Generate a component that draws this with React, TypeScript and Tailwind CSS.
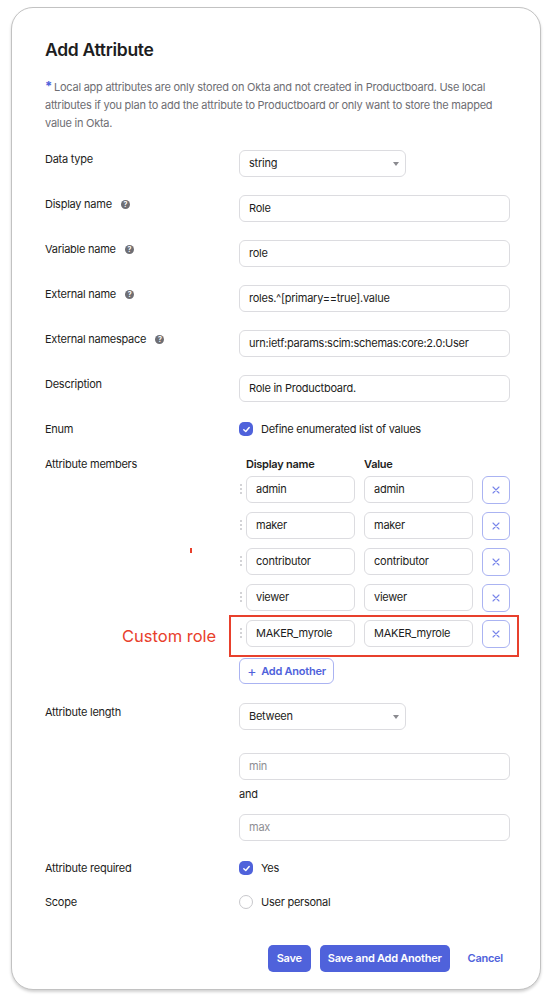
import React from "react";

const Help = () => (
  <span className="ml-[9px] inline-flex h-[9px] w-[9px] items-center justify-center rounded-full bg-[#6e6e73] text-[7px] font-bold leading-none text-white">?</span>
);

const Check = () => (
  <span className="inline-flex h-[14px] w-[14px] items-center justify-center rounded-[5px] bg-[#4f62db]">
    <svg width="9" height="9" viewBox="0 0 10 10" fill="none">
      <path d="M2 5.2 L4.2 7.3 L8 2.8" stroke="white" strokeWidth="1.6" strokeLinecap="round" strokeLinejoin="round" />
    </svg>
  </span>
);

const Caret = () => (
  <svg width="6" height="4" viewBox="0 0 6 4">
    <path d="M0 0 L6 0 L3 4 Z" fill="#8a8a8f" />
  </svg>
);

const Row = ({ label, help, children, className = "" }: { label: string; help?: boolean; children: React.ReactNode; className?: string }) => (
  <div className={`flex ${className}`}>
    <div className="flex h-[18px] w-[194px] shrink-0 items-center text-[11px] text-[#1d1d21]">
      {label}
      {help && <Help />}
    </div>
    <div className="flex flex-col">{children}</div>
  </div>
);

const Input = ({ value, placeholder, w = "w-[271px]" }: { value?: string; placeholder?: string; w?: string }) => (
  <div className={`flex h-[27px] ${w} items-center rounded-[6px] border border-[#dcdce0] bg-white px-[9px] text-[11px] ${value ? "text-[#1d1d21]" : "text-[#8e8e93]"}`}>
    {value ?? placeholder}
  </div>
);

const Select = ({ value }: { value: string }) => (
  <div className="flex h-[27px] w-[167px] items-center justify-between rounded-[6px] border border-[#dcdce0] bg-white pl-[9px] pr-[6px] text-[11px] text-[#1d1d21]">
    <span>{value}</span>
    <Caret />
  </div>
);

const Handle = () => (
  <div className="flex w-[7px] shrink-0 flex-col items-start gap-[2px] pt-[8px] pl-[1px]">
    <span className="h-[2px] w-[2px] rounded-full bg-[#c4c4c8]" />
    <span className="h-[2px] w-[2px] rounded-full bg-[#c4c4c8]" />
    <span className="h-[2px] w-[2px] rounded-full bg-[#c4c4c8]" />
  </div>
);

const XBtn = () => (
  <div className="flex h-[28px] w-[28px] items-center justify-center rounded-[6px] border border-[#aab3f2] bg-white">
    <svg width="8" height="8" viewBox="0 0 8 8">
      <path d="M1 1 L7 7 M7 1 L1 7" stroke="#7885ea" strokeWidth="1.1" strokeLinecap="round" />
    </svg>
  </div>
);

const members = ["admin", "maker", "contributor", "viewer", "MAKER_myrole"];

export default function App() {
  return (
    <div className="min-h-[1006px] bg-white pl-[11px] pt-[7px] tracking-[-0.25px]" style={{ fontFamily: "Inter, 'Noto Sans', sans-serif" }}>
      <div className="relative h-[983px] w-[530px] rounded-[22px] border border-[#c2c2c2] bg-white px-[33px] pt-[31px] shadow-[0_2px_3px_rgba(0,0,0,0.18)]">
        <h1 className="text-[17.5px] font-semibold leading-[22px] tracking-[-0.3px] text-[#1d1d21]">Add Attribute</h1>
        <p className="mt-[17px] text-[11px] leading-[18px] text-[#6e6e73]">
          <span className="mr-[2px] text-[13px] font-bold leading-none text-[#4f62db]">*</span>Local app attributes are only stored on Okta and not created in Productboard. Use local attributes if you plan to add the attribute to Productboard or only want to store the mapped value in Okta.
        </p>

        <Row label="Data type" className="mt-[18px]">
          <Select value="string" />
        </Row>
        <Row label="Display name" help className="mt-[18px]">
          <Input value="Role" />
        </Row>
        <Row label="Variable name" help className="mt-[18px]">
          <Input value="role" />
        </Row>
        <Row label="External name" help className="mt-[18px]">
          <Input value="roles.^[primary==true].value" />
        </Row>
        <Row label="External namespace" help className="mt-[18px]">
          <Input value="urn:ietf:params:scim:schemas:core:2.0:User" />
        </Row>
        <Row label="Description" className="mt-[18px]">
          <Input value="Role in Productboard." />
        </Row>
        <Row label="Enum" className="mt-[18px]">
          <div className="flex h-[18px] items-center gap-[8px] text-[11px] text-[#1d1d21]">
            <Check />
            <span>Define enumerated list of values</span>
          </div>
        </Row>
        <Row label="Attribute members" className="mt-[17px]">
          <div className="flex h-[18px] items-center text-[11px] font-semibold text-[#1d1d21]">
            <span className="ml-[7px] w-[118px]">Display name</span>
            <span>Value</span>
          </div>
          <div className="mt-[3px] flex flex-col gap-[8px]">
            {members.map((m) => (
              <div key={m} className="flex items-start">
                <Handle />
                <div className="flex items-start gap-[9px]">
                  <Input value={m} w="w-[109px]" />
                  <Input value={m} w="w-[109px]" />
                  <XBtn />
                </div>
              </div>
            ))}
          </div>
          <div className="mt-[10px] flex h-[26px] w-[95px] items-center justify-center gap-[5px] rounded-[6px] border border-[#aab3f2] text-[11px] font-semibold text-[#4f62db]">
            <span className="text-[14px] font-normal leading-none">+</span>
            <span>Add Another</span>
          </div>
        </Row>
        <Row label="Attribute length" className="mt-[19px]">
          <Select value="Between" />
          <div className="mt-[23px]">
            <Input placeholder="min" />
          </div>
          <div className="mt-[5px] h-[18px] text-[11px] leading-[18px] text-[#1d1d21]">and</div>
          <div className="mt-[11px]">
            <Input placeholder="max" />
          </div>
        </Row>
        <Row label="Attribute required" className="mt-[18px]">
          <div className="flex h-[18px] items-center gap-[8px] text-[11px] text-[#1d1d21]">
            <Check />
            <span>Yes</span>
          </div>
        </Row>
        <Row label="Scope" className="mt-[16px]">
          <div className="flex h-[18px] items-center gap-[8px] text-[11px] text-[#1d1d21]">
            <span className="h-[14px] w-[14px] rounded-full border border-[#c8c8cc] bg-white" />
            <span>User personal</span>
          </div>
        </Row>

        <div className="mt-[34px] flex items-center justify-end pr-[4px]">
          <button className="h-[27px] rounded-[5px] bg-[#4f62db] px-[9px] text-[11px] font-semibold text-white">Save</button>
          <button className="ml-[9px] h-[27px] rounded-[5px] bg-[#4f62db] px-[8px] text-[11px] font-semibold text-white">Save and Add Another</button>
          <span className="ml-[18px] text-[11px] font-semibold text-[#4f62db]">Cancel</span>
        </div>

        <div className="pointer-events-none absolute left-[217px] top-[607px] h-[42px] w-[290px] border-2 border-[#e8402c]" />
        <span className="absolute left-[110px] top-[618px] text-[16.5px] leading-[20px] tracking-normal text-[#e8402c]">Custom role</span>
        <span className="absolute left-[178px] top-[540px] h-[5px] w-[2px] bg-[#e8402c]" />
      </div>
    </div>
  );
}
